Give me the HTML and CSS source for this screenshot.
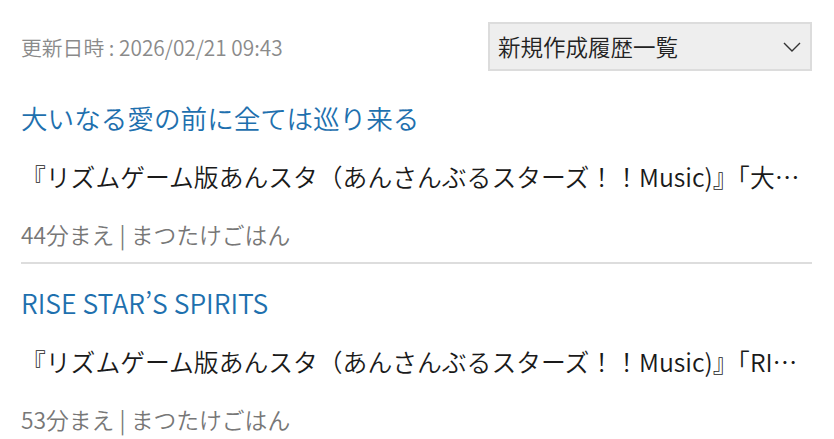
FILE: index.html
```html
<!DOCTYPE html>
<html lang="ja">
<head>
<meta charset="utf-8">
<title>新規作成履歴一覧</title>
<link rel="stylesheet" href="styles.css">
</head>
<body>
<div class="page">
  <div class="header">
    <div class="updated">更新日時 : 2026/02/21 09:43</div>
    <div class="select">
      <span class="select-label">新規作成履歴一覧</span>
      <svg class="chevron" width="18" height="10" viewBox="0 0 18 10"><path d="M1 1 L9 9 L17 1" fill="none" stroke="#333" stroke-width="1.4"/></svg>
    </div>
  </div>
  <ul class="list">
    <li class="item">
      <a class="title" href="#">大いなる愛の前に全ては巡り来る</a>
      <p class="desc">『リズムゲーム版あんスタ（あんさんぶるスターズ！！Music)』「大いなる愛の前に全ては巡り来る」の楽曲情報です。</p>
      <p class="meta">44分まえ | まつたけごはん</p>
    </li>
    <li class="item">
      <a class="title" href="#">RISE STAR’S SPIRITS</a>
      <p class="desc">『リズムゲーム版あんスタ（あんさんぶるスターズ！！Music)』「RISE STAR’S SPIRITS」の楽曲情報です。</p>
      <p class="meta">53分まえ | まつたけごはん</p>
    </li>
  </ul>
</div>
</body>
</html>
```
FILE: styles.css
```css
html, body {
  margin: 0;
  padding: 0;
  background: #fff;
}
body {
  font-family: "Noto Sans CJK JP", "Noto Sans", sans-serif;
  font-weight: 350;
  color: #222;
}
.page {
  padding: 22px 22px 0 21px;
}
.header {
  display: flex;
  justify-content: space-between;
  align-items: center;
  margin-bottom: 8px;
}
.updated {
  font-size: 20.8px;
  color: #8a8a8a;
  line-height: 30px;
}
.select {
  box-sizing: border-box;
  width: 324px;
  height: 49px;
  background: #eeeeee;
  border: 2px solid #dcdcdc;
  display: flex;
  align-items: center;
  justify-content: space-between;
  padding: 0 8px 0 8px;
}
.select-label {
  font-size: 22.5px;
  color: #222;
  line-height: 1;
}
.chevron {
  display: block;
  margin-right: 1px;
}
.list {
  list-style: none;
  margin: 0;
  padding: 0;
}
.item {
  padding: 19px 0 12px;
  border-bottom: 2px solid #dddddd;
}
.title {
  display: block;
  font-size: 26.6px;
  line-height: 40px;
  color: #1e70ae;
  text-decoration: none;
}
.desc {
  margin: 20px 0 0;
  font-size: 24.8px;
  line-height: 36px;
  color: #1a1a1a;
  white-space: nowrap;
  overflow: hidden;
  text-overflow: ellipsis;
}
.meta {
  margin: 26px 0 0;
  font-size: 22.8px;
  line-height: 30px;
  color: #777;
}
```
